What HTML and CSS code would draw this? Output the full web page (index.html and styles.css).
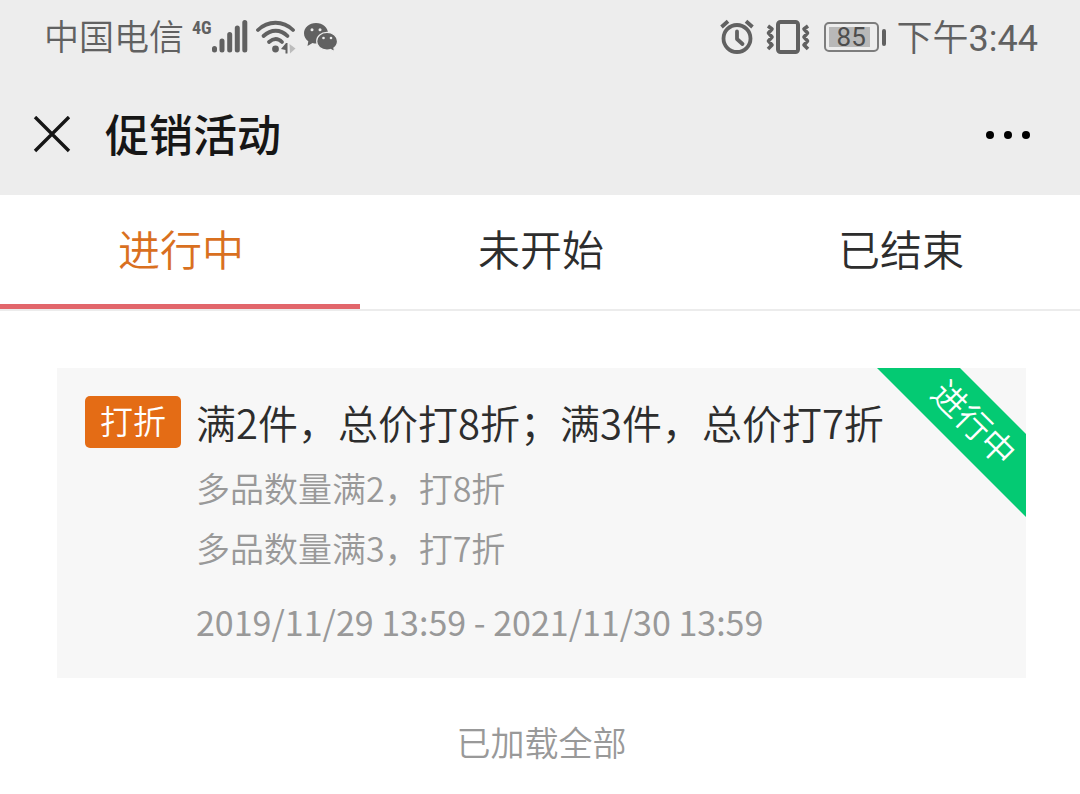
FILE: index.html
```html
<!DOCTYPE html>
<html lang="zh-CN">
<head>
<meta charset="utf-8">
<meta name="viewport" content="width=device-width, initial-scale=1">
<title>促销活动</title>
<link rel="stylesheet" href="styles.css">
</head>
<body>
<header class="header">
  <div class="status">
    <div class="status-left">
      <span class="carrier">中国电信</span>
      <span class="signal">
        <span class="network">4G</span>
        <svg class="bars" width="36" height="34" viewBox="0 0 36 34" fill="none" stroke="currentColor" stroke-width="5" stroke-linecap="round"><path d="M2.500 30v-1.500M10 30v-9M17.700 30v-15.500M25.300 30v-22M32.800 30v-27.500"/></svg>
      </span>
      <svg class="wifi" width="40" height="34" viewBox="0 0 40 34"><g fill="none" stroke="currentColor" stroke-width="3.800" stroke-linecap="round"><path d="M2 10C12 .3 27 .3 37 10"/><path d="M7.500 16C15 9 24.500 9 31.500 16"/><path d="M13 22C17.500 18 22 18 26 22"/></g><circle cx="19.500" cy="29" r="3.400" fill="currentColor"/><path d="M25 29l5-6h1.500v10.500h-2V30z" fill="currentColor"/><path d="M33.500 24l6 4.500-5.500 5z" fill="#bcbcbc"/></svg>
      <svg class="wechat" width="34" height="32" viewBox="0 0 34 32"><path d="M12 2C5.300 2 0 6.500 0 12.300c0 3.400 1.700 6.100 4.300 8L3.500 25l5-3c1.300.4 3 .6 4.500.5C22 22 24 17 24 12.300 24 6.500 18.700 2 12 2z" fill="currentColor"/><path d="M23 11.400c-5.900 0-10.300 3.800-10.300 8.800S17 29 23 29c1.300 0 2.500-.1 3.600-.5l4 2.300-.7-3.800c2.200-1.600 3.600-4 3.600-6.800 0-5-4.500-8.800-10.500-8.800z" fill="currentColor" stroke="#ededed" stroke-width="1.200"/><g fill="#ededed"><circle cx="8" cy="8.700" r="1.500"/><circle cx="16" cy="8.700" r="1.500"/><circle cx="19.500" cy="17" r="1.300"/><circle cx="27" cy="17" r="1.300"/></g></svg>
    </div>
    <div class="status-right">
      <svg width="34" height="36" viewBox="0 0 34 36" fill="none" stroke="currentColor" stroke-width="3.800"><circle cx="17" cy="19.500" r="13.500"/><path d="M17 12.500V20l5.500 5" stroke-linecap="round" stroke-linejoin="round"/><path d="M1.500 8 8 2.300M26 2.300l6.500 5.700"/></svg>
      <svg width="44" height="36" viewBox="0 0 44 36" fill="none" stroke="currentColor" stroke-linejoin="round"><rect x="12" y="3" width="20" height="30" rx="2.500" stroke-width="4"/><path d="M2 7l4 3-3.500 4L6 18l-3.500 4L6 26l-4 4M42 7l-4 3 3.500 4L38 18l3.500 4-3.500 4 4 4" stroke-width="3.600"/></svg>
      <span class="battery"><span class="charge">85</span></span>
      <span class="clock">下午<time class="time">3:44</time></span>
    </div>
  </div>
  <div class="nav">
    <button class="icon-button" type="button" aria-label="关闭"><svg width="38" height="38" viewBox="0 0 38 38" stroke="currentColor" stroke-width="3.400"><path d="M2 1l34 34M36 1L2 35"/></svg></button>
    <h1 class="nav-title">促销活动</h1>
    <button class="icon-button" type="button" aria-label="更多"><svg width="46" height="10" viewBox="0 0 46 10" fill="#000"><circle cx="5" cy="5" r="4"/><circle cx="23" cy="5" r="4"/><circle cx="41" cy="5" r="4"/></svg></button>
  </div>
</header>
<nav class="tabs">
  <button class="tab tab-active" type="button">进行中</button>
  <button class="tab" type="button">未开始</button>
  <button class="tab" type="button">已结束</button>
</nav>
<main class="content">
  <article class="card">
    <span class="tag">打折</span>
    <div class="details">
      <h2 class="card-title">满2件，总价打8折；满3件，总价打7折</h2>
      <p class="rule">多品数量满2，打8折</p>
      <p class="rule">多品数量满3，打7折</p>
      <p class="period">2019/11/29 13:59 - 2021/11/30 13:59</p>
    </div>
    <div class="ribbon"><span class="ribbon-text">进行中</span></div>
  </article>
  <p class="end">已加载全部</p>
</main>
</body>
</html>
```
FILE: styles.css
```css
* {
  box-sizing: border-box;
}

body {
  margin: 0;
  background: #fff;
  color: #2d2d2d;
  font-family: "Noto Sans CJK SC", sans-serif;
  font-weight: 350;
}

h1, h2, p {
  margin: 0;
  font-weight: inherit;
}

button {
  padding: 0;
  border: 0;
  background: none;
  color: inherit;
  font: inherit;
}

svg {
  display: block;
  flex: none;
}

.header {
  background: #ededed;
}

.status {
  display: flex;
  justify-content: space-between;
  height: 74px;
  padding: 0 42px 0 44px;
  color: #616161;
  font-family: Roboto, "Noto Sans CJK SC", sans-serif;
  line-height: 44px;
}

.status-left,
.status-right {
  display: flex;
  align-items: center;
}

.status-left {
  gap: 8px;
}

.carrier {
  padding-top: 4px;
  font-size: 35px;
}

.clock {
  padding-top: 3px;
  font-size: 36px;
}

.time {
  font-weight: 400;
}

.signal {
  display: flex;
  align-items: flex-start;
}

.network {
  font-family: "Roboto Condensed", Roboto, sans-serif;
  font-size: 18px;
  font-weight: 700;
  line-height: 16px;
}

.status-right {
  gap: 12px;
}

.battery {
  display: flex;
  position: relative;
  width: 55px;
  height: 30px;
  margin: 0 6px 0 2px;
  padding: 3px;
  border: 2px solid #7d7d7d;
  border-radius: 5px;
}

.battery::after {
  content: "";
  position: absolute;
  top: 5px;
  right: -9px;
  width: 4px;
  height: 17px;
  border-radius: 2px;
  background: #616161;
}

.charge {
  width: 41px;
  padding-left: 8px;
  background: #b8b8b8;
  color: #4d4d4d;
  font-size: 26px;
  font-weight: 400;
  line-height: 21px;
}

.nav {
  display: flex;
  align-items: center;
  gap: 34px;
  height: 121px;
  padding: 0 49px 0 33px;
  color: #161616;
}

.nav-title {
  flex: 1;
  padding-bottom: 3px;
  font-size: 44px;
  font-weight: 500;
  line-height: 60px;
}

.tabs {
  display: grid;
  grid-template-columns: repeat(3, 1fr);
  border-bottom: 2px solid #ececec;
}

.tab {
  padding: 23px 0 26px 2px;
  border-bottom: 5px solid transparent;
  font-size: 42px;
  line-height: 60px;
}

.tab-active {
  border-color: #e2666b;
  color: #d9701f;
}

.content {
  padding: 57px 54px 20px 57px;
}

.card {
  display: flex;
  align-items: flex-start;
  gap: 15px;
  position: relative;
  padding: 26px 28px 26px;
  background: #f7f7f7;
}

.tag {
  flex: none;
  margin-top: 2px;
  padding: 0 15px 4px;
  border-radius: 5px;
  background: #e46c15;
  color: #fff;
  font-size: 33px;
  line-height: 48px;
}

.card-title {
  margin-bottom: 8px;
  font-size: 40px;
  line-height: 56px;
}

.rule,
.period,
.end {
  color: #999;
  font-size: 34px;
  line-height: 60px;
}

.period {
  margin-top: 14px;
  font-weight: 400;
}

.ribbon {
  position: absolute;
  top: 0;
  right: 0;
  width: 149px;
  height: 149px;
}

.ribbon::before {
  content: "";
  position: absolute;
  inset: 0;
  background: #04ca73;
  clip-path: polygon(0 0, 83px 0, 100% 66px, 100% 100%);
}

.ribbon-text {
  position: absolute;
  top: 37px;
  left: 47px;
  color: #fff;
  font-size: 34px;
  line-height: 34px;
  white-space: nowrap;
  transform: rotate(45deg);
}

.end {
  margin-top: 34px;
  text-align: center;
}
```
